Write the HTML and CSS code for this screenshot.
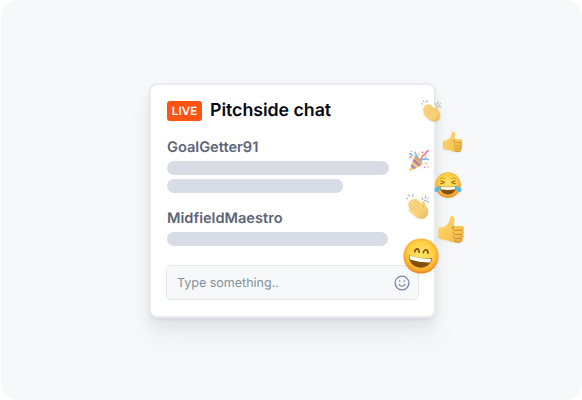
FILE: index.html
```html
<!DOCTYPE html>
<html lang="en">
<head>
<meta charset="utf-8">
<title>Pitchside chat</title>
<link rel="stylesheet" href="styles.css">
</head>
<body>
<svg class="defs" aria-hidden="true">
  <defs>
    <linearGradient id="skin" x1="0" y1="0" x2="1" y2="1"><stop offset="0" stop-color="#ffd76c"/><stop offset=".65" stop-color="#f8c655"/><stop offset="1" stop-color="#e0a640"/></linearGradient>
    <linearGradient id="skinPale" x1="0" y1="0" x2="1" y2="1"><stop offset="0" stop-color="#ffde8e"/><stop offset=".65" stop-color="#f9d078"/><stop offset="1" stop-color="#e3b35f"/></linearGradient>
    <radialGradient id="face" cx=".5" cy=".43" r=".58"><stop offset="0" stop-color="#ffe56c"/><stop offset=".6" stop-color="#ffcf43"/><stop offset=".85" stop-color="#f8a82c"/><stop offset="1" stop-color="#df7d16"/></radialGradient>
    <symbol id="clap" viewBox="0 0 22 25">
      <path d="M2.2 12.2C.8 10.8 1.8 9.2 3.2 9.6 2.3 8 3.7 6.8 5 7.4 5 5.8 6.7 5.2 7.8 6.2 8.8 5.2 10.2 5.6 11.1 6.5l4.7 4.3-.4-1.7c-.2-1.7 1.9-2 2.4-.5l1.5 4.3c1.8 1.8 2.4 3.9 1.8 6.2-.5 2.5-1.7 4.3-3.3 5.1-2.8 1.4-6.3.5-9-1.5L3 17.3c-1.2-1-.5-2.4.7-2.1z" fill="url(#skinPale)"/>
      <path d="M3.5 10l6.1 5.7M5.3 7.8l6.4 6.1M7.9 6.5l6 5.7M3.3 13.3l5.4 4.5M15.8 10.8l1 3.1" fill="none" stroke="#dca755" stroke-width=".55" stroke-linecap="round"/>
      <path d="M.2 4.7l1.4 1M2.4 1.6l.9 1.7M6.5 1.4l-.2 2M15.4 4.6l.8 1.8M18.8 2.9l-.5 2M18 7.3l1.5.2M21.2 4.8l-.9 1M20.4 8.4l1.4.2" fill="none" stroke="#999fa8" stroke-width=".9" stroke-linecap="round"/>
    </symbol>
    <symbol id="thumb" viewBox="0 0 26 28">
      <path d="M.8 12.3c2-.6 4.4.1 6.1-1.2 2.2-1.4 4.1-3.6 4.7-5.8L12.3 2c.4-1.7 3.1-1.3 3.8.5.8 2-.1 5.1-.9 8l7.8.1c3.3 0 3.4 3.5 1 4.1 2.4.4 2.2 3.9 0 4.2 2 .6 1.6 3.6-.3 3.9 1.3.8.8 3.3-1.4 3.5-4.3.6-8.1.4-10.9-1.1C7.3 23.9 4.2 23.8.8 22.4z" fill="url(#skin)"/>
      <path d="M24 14.7h-7c-2.1 0-2.6-1.8-1.1-2.7M23.8 18.8h-7.1c-1.6 0-2-1.5-1.3-2.6M23.3 22.7h-6.2c-1.5 0-2-1.5-1.4-2.5M21.5 26.2c-2 .2-5.1.2-5.2-1.8M15.2 10.5l-1.1 2.1" fill="none" stroke="#c98926" stroke-width=".85" stroke-linecap="round"/>
    </symbol>
  </defs>
</svg>
<main class="stage">
  <section class="card">
    <header class="heading"><span class="live">LIVE</span><h1>Pitchside chat</h1></header>
    <article class="message"><h2>GoalGetter91</h2><div class="line long"></div><div class="line short"></div></article>
    <article class="message"><h2>MidfieldMaestro</h2><div class="line medium"></div></article>
    <div class="composer"><span>Type something..</span>
      <svg class="smile" viewBox="0 0 16 16" fill="none" stroke="#7686a0" stroke-linecap="round"><circle cx="8" cy="8" r="6.9" stroke-width="1.3"/><path d="M5 9.5c1.3 2.3 4.7 2.3 6 0" stroke-width="1.2"/><path d="M5.7 6v.3M10.3 6v.3" stroke-width="1.5"/></svg>
    </div>
    <svg class="emoji clap-a" viewBox="0 0 22 25"><use href="#clap"/></svg>
    <svg class="emoji thumb-a" viewBox="0 0 26 28"><use href="#thumb"/></svg>
    <svg class="emoji party" viewBox="0 0 22 22">
      <path d="M6.8 5.6L1.5 20.2c-.2.7.2 1 .9.8l11.8-6.2c.5-3.4-3.4-9.2-7.4-9.2z" fill="#f5cc70"/>
      <path d="M5.8 8.5l6.9 6.7-2 1.1-6-5.1zM3.7 14.1l4.2 3.9-1.8 1-3.2-2.7z" fill="#a879c8"/>
      <ellipse cx="10.5" cy="10.2" rx="2" ry="5.6" transform="rotate(-38 10.5 10.2)" fill="#e2b264"/>
      <path d="M9.6 9.8C9 6 8.8 4.4 6.5 1.6M1.1 3.1l3.7 2.5" fill="none" stroke="#7db5e9" stroke-width="1.4"/>
      <path d="M12 9.5c3.7-.5.2-3.5 3.3-4 2.7-.4 1.6-4.3 5.5-5M1.5 7.6l2-1M13.8 1.6l1.2 1.7" fill="none" stroke="#ea7692" stroke-width="1.5"/>
      <path d="M12.3 11.1c2.5-2.9 4.8-2.6 8.6-1.5" fill="none" stroke="#7db5e9" stroke-width="1.4"/>
      <path d="M17.2 13.2l1.3.3M19.7 16.4l.2.8M10.8 3.6l.2 1M17.5 7.1l1-.3" stroke="#efb25e" stroke-width="1.2" stroke-linecap="round"/>
      <path d="M16.1 17.1l1 .6M3.3 1.2l.5.6" stroke="#e77195" stroke-width="1.2"/>
    </svg>
    <svg class="emoji joy" viewBox="0 0 28 28">
      <circle cx="14" cy="14" r="12.8" fill="url(#face)"/>
      <path d="M6.4 7.6c1.6-1.2 3.3-1 4.2-.2M17.2 7.4c1.2-1 2.9-1 4.2.2" fill="none" stroke="#b9761f" stroke-width=".7" stroke-linecap="round"/>
      <path d="M7 9.8l4 1.7-4.3 1.2M21 9.8l-4 1.7 4.3 1.2" fill="none" stroke="#955a16" stroke-width="1" stroke-linecap="round" stroke-linejoin="round"/>
      <path d="M5.8 15c4.6.9 11.8.9 16.4 0 .2 5.2-3.8 8.5-8.2 8.5S5.6 20.2 5.8 15z" fill="#80501b"/>
      <path d="M6.4 15.2c4.8.9 10.4.9 15.2 0l-.4 3.1c-4.5 1-9.9 1-14.4 0z" fill="#fff8e7"/>
      <path d="M5.8 14.8c.5 3.4-.1 6-2.9 6.1-3.5.1-3.1-3.5-.3-4.7zM22.2 14.8c-.5 3.4.1 6 2.9 6.1 3.5.1 3.1-3.5.3-4.7z" fill="#55baeb"/>
    </svg>
    <svg class="emoji clap-b" viewBox="0 0 22 25"><use href="#clap"/></svg>
    <svg class="emoji thumb-b" viewBox="0 0 26 28"><use href="#thumb"/></svg>
    <svg class="emoji grin" viewBox="0 0 36 36">
      <circle cx="18" cy="18" r="17.6" fill="url(#face)"/>
      <g transform="rotate(9 18 18)">
        <path d="M11.2 14.8c.2-4.3 3.6-4.4 4.4-.3M19.8 14.3c.3-4.3 4-4.3 4.7-.1" fill="none" stroke="#885010" stroke-width="1.7" stroke-linecap="round"/>
        <path d="M6.2 18.8c6.4 1.8 16.5 1.6 23.2-.5.1 6.8-5.2 11.3-11.7 11.4-6.2 0-11.6-4.3-11.5-10.9z" fill="#85500b"/>
        <path d="M6.8 19.1c6.2 1.6 15.7 1.4 22 0-.1 1.5-.4 2.7-.9 3.8-5.5 1.4-14.8 1.4-20.3.1-.5-1.2-.8-2.4-.8-3.9z" fill="#fffdf2"/>
      </g>
    </svg>
  </section>
</main>
</body>
</html>
```
FILE: styles.css
```css
* { box-sizing: border-box; }
body { margin: 0; background: #fff; font-family: Inter, sans-serif; text-rendering: geometricPrecision; }
.defs { position: absolute; width: 0; height: 0; }
.stage {
  height: 400px;
  padding: 83px 0 0 148px;
  border-radius: 17px;
  background: #f6f8fa;
  margin-left: 1px;
  overflow: hidden;
}
.card {
  position: relative;
  width: 287px;
  height: 235px;
  padding: 15px 15px 16px 15px;
  border: 2px solid #e8ebf2;
  border-radius: 8px;
  background: #fff;
  box-shadow: 0 2px 3px #2025300c, 0 8px 14px #20253012, 0 22px 28px #2025300a;
}
.heading { display: flex; align-items: center; height: 22px; gap: 8px; padding-left: 1px; }
.live {
  width: 35px;
  height: 20px;
  border-radius: 3px;
  background: #ff5314;
  color: #fff;
  font-size: 11.5px;
  font-weight: 600;
  line-height: 21px;
  text-align: center;
  letter-spacing: .1px;
}
h1, h2 { margin: 0; }
h1 { font-size: 17.8px; font-weight: 600; letter-spacing: -.05px; line-height: 22px; color: #060713; }
.message { padding-left: 1px; margin-top: 15px; }
h2 { font-size: 14.6px; font-weight: 600; line-height: 20px; color: #5c6479; margin-bottom: 4px; }
.line { height: 14px; border-radius: 7px; background: #d8dce4; }
.line + .line { margin-top: 4px; }
.long { width: 222px; }
.short { width: 176px; }
.medium { width: 221px; }
.message + .message { margin-top: 15px; }
.composer {
  display: flex;
  align-items: center;
  justify-content: space-between;
  height: 35px;
  margin-top: 19px;
  padding: 0 8px 0 10px;
  border: 1px solid #e3e6ec;
  border-radius: 5px;
  background: #f6f8fa;
  color: #81909d;
  font-size: 12.5px;
}
.composer span { padding-top: 1px; }
.smile { width: 16px; height: 16px; }
.emoji { position: absolute; overflow: visible; filter: drop-shadow(0 1px 1px #30303012); }
.clap-a { left: 270px; top: 14px; width: 20px; height: 23px; }
.thumb-a { left: 291px; top: 46px; width: 21px; height: 22px; }
.party { left: 257px; top: 65px; width: 22px; height: 22px; }
.joy { left: 283px; top: 86px; width: 28px; height: 28px; }
.clap-b { left: 255px; top: 108px; width: 23px; height: 26px; }
.thumb-b { left: 286px; top: 130px; width: 28px; height: 29px; }
.grin { left: 252px; top: 153px; width: 36px; height: 36px; }
```
